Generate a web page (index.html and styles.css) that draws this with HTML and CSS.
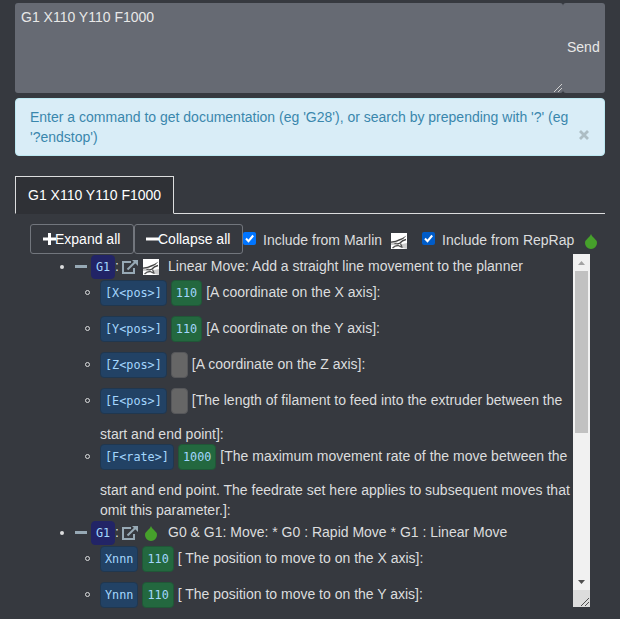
FILE: index.html
```
<!DOCTYPE html>
<html lang="en">
<head>
<meta charset="utf-8">
<title>G-code documentation</title>
<link rel="stylesheet" href="styles.css">
</head>
<body>
<svg class="defs" width="0" height="0">
  <symbol id="marlin" viewBox="0 0 16 16">
    <path fill="#fff" d="M0 0h16v16H0z"/>
    <path fill="#ccc" d="M0 9l7-1-3 4H0zM8 14l3-3 5-1v6z"/>
    <path fill="#444" d="M0 8.600Q5 8 8 6.300Q12 5 15.500 2.500Q13 6 9 7.600Q5 9.500 0 9.700z"/>
    <path fill="none" stroke="#444" stroke-width="1.300" d="M15 6.500Q11 7.500 9 10Q7 11.500 3.500 10.500"/>
    <path fill="none" stroke="#555" stroke-width="1.300" d="M1.500 15Q4 12.500 7 12.500L11.500 14.500M9.500 10.500L11 14"/>
  </symbol>
  <symbol id="drop" viewBox="0 0 12 15">
    <path fill="#46a02b" d="M6 0Q6.500 2 9 4Q12 6.500 12 9A6 6 0 0 1 0 9Q0 6.500 3 4Q5.500 2 6 0Z"/>
  </symbol>
  <symbol id="external" viewBox="0 0 16 14">
    <path fill="none" stroke="#97a9b5" stroke-width="2" d="M9 2H1v11h11V8"/>
    <path fill="none" stroke="#97a9b5" stroke-width="2" d="M5.500 9.500L13.500 1.800"/>
    <path fill="#97a9b5" d="M10 0h6v6z"/>
  </symbol>
  <symbol id="grip" viewBox="0 0 8 8">
    <path fill="none" stroke="currentColor" d="M0 8L8 0M4 8l4-4"/>
  </symbol>
</svg>

<main class="page">
  <div class="command">
    <div class="command-text">G1 X110 Y110 F1000<svg class="grip" width="8" height="8"><use href="#grip"/></svg></div>
    <div class="send">Send</div>
  </div>

  <div class="alert">
    <p>Enter a command to get documentation (eg 'G28'), or search by prepending with '?' (eg '?endstop')</p>
    <svg class="close" width="10" height="10" viewBox="0 0 10 10"><path stroke="#adbdc4" stroke-width="2.800" d="M1 1l8 8M9 1L1 9"/></svg>
  </div>

  <div class="tabs"><div class="tab">G1 X110 Y110 F1000</div></div>

  <div class="toolbar">
    <div class="btn expand"><svg width="13" height="12" viewBox="0 0 13 12"><path fill="#fff" d="M5 0h3v4.500h5v3H8V12H5V7.500H0v-3h5z"/></svg>Expand all</div>
    <div class="btn collapse"><svg width="13" height="12" viewBox="0 0 13 12"><path fill="#fff" d="M0 4.500h13v3H0z"/></svg>Collapse all</div>
    <span class="check light"><svg width="13" height="13" viewBox="0 0 13 13"><path d="M3 6.500l2.500 2.700L10.200 3.500"/></svg></span>
    <span class="label marlin-label">Include from Marlin</span>
    <svg class="marlin" width="16" height="16"><use href="#marlin"/></svg>
    <span class="check dark"><svg width="13" height="13" viewBox="0 0 13 13"><path d="M3 6.500l2.500 2.700L10.200 3.500"/></svg></span>
    <span class="label reprap-label">Include from RepRap</span>
    <svg class="drop" width="12" height="15"><use href="#drop"/></svg>
  </div>

  <div class="results">
    <ul class="list">
      <li>
        <div class="head"><i class="dot"></i><i class="minus"></i><code class="cmd">G1</code><span class="colon">:</span><svg class="ext" width="16" height="14"><use href="#external"/></svg><span class="source"><svg width="16" height="16"><use href="#marlin"/></svg></span><span class="title">Linear Move: Add a straight line movement to the planner</span></div>
        <ul class="params">
          <li><i class="ring"></i><div class="line"><code>[X&lt;pos&gt;]</code><code class="value">110</code><span>[A coordinate on the X axis]:</span></div></li>
          <li><i class="ring"></i><div class="line"><code>[Y&lt;pos&gt;]</code><code class="value">110</code><span>[A coordinate on the Y axis]:</span></div></li>
          <li><i class="ring"></i><div class="line"><code>[Z&lt;pos&gt;]</code><code class="empty"></code><span>[A coordinate on the Z axis]:</span></div></li>
          <li><i class="ring"></i><div class="line"><code>[E&lt;pos&gt;]</code><code class="empty"></code><span>[The length of filament to feed into the extruder between the</span></div><p>start and end point]:</p></li>
          <li><i class="ring"></i><div class="line"><code>[F&lt;rate&gt;]</code><code class="value">1000</code><span>[The maximum movement rate of the move between the</span></div><p>start and end point. The feedrate set here applies to subsequent moves that<br>omit this parameter.]:</p></li>
        </ul>
      </li>
      <li>
        <div class="head"><i class="dot"></i><i class="minus"></i><code class="cmd">G1</code><span class="colon">:</span><svg class="ext" width="16" height="14"><use href="#external"/></svg><span class="source"><svg class="drop" width="12" height="15"><use href="#drop"/></svg></span><span class="title">G0 &amp; G1: Move: * G0 : Rapid Move * G1 : Linear Move</span></div>
        <ul class="params">
          <li><i class="ring"></i><div class="line"><code>Xnnn</code><code class="value">110</code><span>[ The position to move to on the X axis]:</span></div></li>
          <li><i class="ring"></i><div class="line"><code>Ynnn</code><code class="value">110</code><span>[ The position to move to on the Y axis]:</span></div></li>
        </ul>
      </li>
    </ul>
    <div class="scrollbar">
      <div class="arrow"><svg width="7" height="4" viewBox="0 0 7 4"><path fill="#a3a3a3" d="M3.500 0L7 4H0z"/></svg></div>
      <div class="thumb"></div>
      <div class="arrow down"><svg width="7" height="4" viewBox="0 0 7 4"><path fill="#505050" d="M0 0h7L3.500 4z"/></svg></div>
      <div class="corner"><svg width="8" height="8"><use href="#grip"/></svg></div>
    </div>
  </div>
</main>
</body>
</html>
```
FILE: styles.css
```
* { box-sizing: border-box; }
body {
  margin: 0;
  height: 619px;
  overflow: hidden;
  background: #36393f;
  color: #dcddde;
  font: 14px/20px "Liberation Sans", Arial, sans-serif;
}
ul, p { margin: 0; padding: 0; list-style: none; }
svg { display: block; flex: none; }
.defs { position: absolute; }
.page { width: 590px; margin-left: 15px; padding-top: 3px; }

.command { display: flex; height: 90px; }
.command-text, .send { background: #666a73; border-radius: 3px; color: #e8e8e8; }
.command-text { width: 548px; padding: 4px 6px; display: flex; justify-content: space-between; }
.command-text .grip { align-self: flex-end; margin: 0 -5px -3px 0; color: #d0d0d0; }
.send { flex: 1; display: flex; align-items: center; padding: 0 0 2px 4px; }

.alert {
  display: flex;
  height: 58px;
  margin-top: 5px;
  padding: 8px 14px;
  background: #d9edf7;
  border: 1px solid #bce8f1;
  border-radius: 4px;
  color: #3a87ad;
}
.alert p { width: 549px; flex: none; }
.alert .close { margin: 23px 0 0; }

.tabs { height: 58px; padding-top: 20px; border-bottom: 1px solid #dcddde; }
.tab {
  width: 159px;
  height: 38px;
  padding: 8px 12px;
  background: #2f3136;
  border: 1px solid #dcddde;
  border-bottom-color: #2f3136;
  color: #fff;
  white-space: nowrap;
}

.toolbar { display: flex; height: 40px; padding: 10px 0 0 15px; }
.btn {
  display: flex;
  align-items: center;
  height: 30px;
  padding-left: 12px;
  border: 1px solid #72767d;
  border-radius: 3px;
  color: #fff;
  white-space: nowrap;
}
.expand { width: 104px; }
.btn svg { margin-right: -1px; }
.collapse { width: 109px; padding-left: 11px; }
.check { width: 13px; height: 13px; margin-top: 8px; border-radius: 2px; }
.check path { fill: none; stroke: #fff; stroke-width: 2; }
.light { background: #0075ff; }
.dark { background: #005cc8; }
.label { margin: 6px 0 0 7px; white-space: nowrap; }
.marlin-label { width: 121px; }
.toolbar .marlin { margin: 9px 15px 0 7px; }
.reprap-label { width: 133px; }
.toolbar .drop { margin: 10px 0 0 10px; }

.results { display: flex; width: 560px; height: 353px; margin-left: 15px; }
.list { width: 543px; white-space: nowrap; }
.head { display: flex; align-items: center; height: 26px; padding-left: 30px; }
.dot { width: 4px; height: 4px; margin-right: 11px; border-radius: 50%; background: #dcddde; }
.minus { width: 12px; height: 3px; margin: 0 4px 1px 0; background: #97a9b5; }
.colon { width: 7px; margin-bottom: 2px; }
.ext { margin-bottom: 1px; }
.title { margin-bottom: 2px; }
.source { width: 30px; padding-left: 5px; }
.source .drop { margin-left: 2px; }
.params { padding-left: 54px; }
.params li { display: grid; grid-template-columns: 16px 1fr; grid-auto-rows: auto; }
.params li::after { content: ""; height: 10px; grid-column: 1; grid-row: 2; }
.ring { width: 5px; height: 5px; margin: 10px 0 0 1px; border: 1px solid #dcddde; border-radius: 50%; }
.line { display: flex; height: 26px; }
.line span { margin: 2px 0 0 4px; }
.params p { grid-column: 2; grid-row: 2; margin-top: 10px; }
code {
  height: 26px;
  padding: 0 4px;
  background: #224265;
  border: 1px solid #20374f;
  border-radius: 4px;
  color: #a4d6fd;
  font: 11.800px/24px "DejaVu Sans Mono", monospace;
}
.value { margin-left: 4px; background: #23683f; border-color: #205637; }
.empty { width: 17px; margin-left: 4px; background: #666; border-color: #56575a; }
.cmd { width: 24px; height: 24px; background: #222466; border-color: #222466; line-height: 22px; }

.scrollbar { width: 17px; background: #f1f1f1; display: flex; flex-direction: column; }
.arrow { display: flex; height: 17px; align-items: center; justify-content: center; }
.thumb { height: 162px; margin: 0 2px; background: #c1c1c1; }
.down { margin-top: auto; }
.corner { display: flex; align-items: flex-end; justify-content: flex-end; height: 17px; padding: 1px; background: #dcdcdc; color: #505050; }
```
